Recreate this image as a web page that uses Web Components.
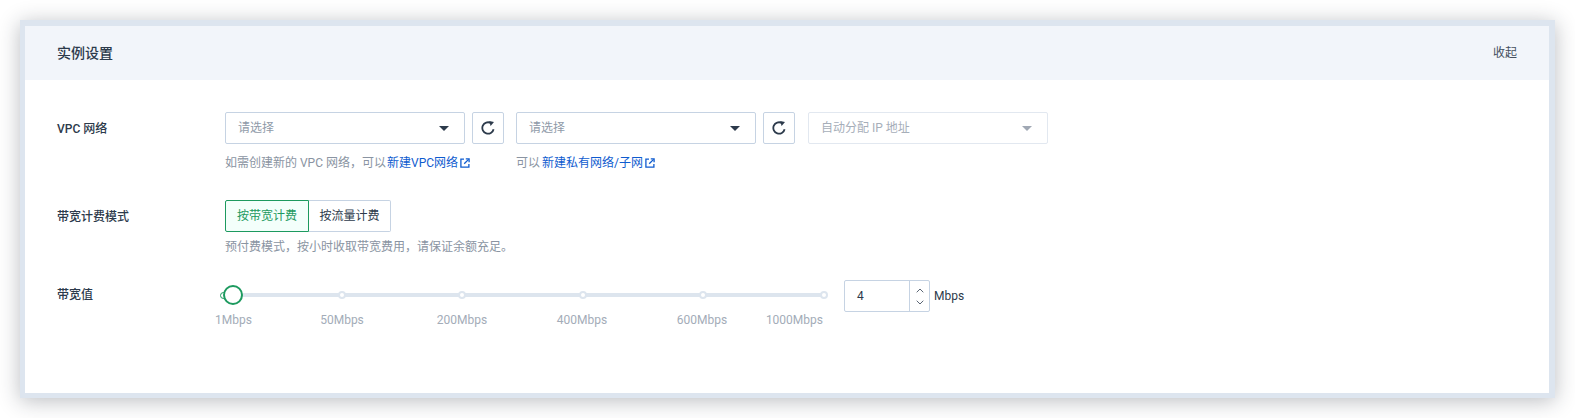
<!DOCTYPE html>
<html lang="zh">
<head>
<meta charset="utf-8">
<title>实例设置</title>
<style>
  html, body { margin: 0; background: #fff; }
  body {
    padding: 20px 20px 20px 20px;
    font: 12px/18px Roboto, "Noto Sans CJK SC", sans-serif;
    color: #2c3a4b;
  }
</style>
</head>
<body>
<inst-panel title-text="实例设置" action="收起">
  <form-row label="VPC 网络">
    <div style="display:flex;align-items:flex-start">
      <div>
        <div style="display:flex;gap:7px"><sel-box placeholder="请选择"></sel-box><refresh-btn></refresh-btn></div>
        <help-text style="margin-top:10px">如需创建新的 VPC 网络，可以<ext-link style="margin-left:1px">新建VPC网络</ext-link></help-text>
      </div>
      <div style="margin-left:12px">
        <div style="display:flex;gap:7px"><sel-box placeholder="请选择"></sel-box><refresh-btn></refresh-btn></div>
        <help-text style="margin-top:10px">可以<ext-link style="margin-left:2px">新建私有网络/子网</ext-link></help-text>
      </div>
      <sel-box placeholder="自动分配 IP 地址" disabled style="margin-left:13px"></sel-box>
    </div>
  </form-row>
  <form-row label="带宽计费模式" style="margin-top:28px">
    <seg-group><seg-item active>按带宽计费</seg-item><seg-item>按流量计费</seg-item></seg-group>
    <help-text style="margin-top:6px">预付费模式，按小时收取带宽费用，请保证余额充足。</help-text>
  </form-row>
  <form-row label="带宽值" style="margin-top:25px" label-offset="-2">
    <div style="display:flex;align-items:flex-start">
      <band-slider></band-slider>
      <num-input value="4" unit="Mbps"></num-input>
    </div>
  </form-row>
</inst-panel>

<script>
// 外层卡片：标题栏 + 内容区
class InstPanel extends HTMLElement {
  connectedCallback() {
    const root = this.shadowRoot || this.attachShadow({ mode: 'open' });
    root.innerHTML = `
      <style>
        :host {
          display: block;
          height: 367px;
          border: solid #dde5ef;
          border-width: 6px 6px 5px 5px;
          box-shadow: 0 3px 20px rgba(30, 35, 50, .3);
          background: #fff;
        }
        header {
          height: 54px;
          padding: 0 32px;
          display: flex;
          align-items: center;
          justify-content: space-between;
          background: #f2f5fa;
        }
        h2 { margin: 0; font-size: 14px; font-weight: 500; color: #2c3a4b; }
        a { font-size: 12px; color: #444f5e; }
        main { padding: 32px 32px 0; }
      </style>
      <header><h2>${this.getAttribute('title-text')}</h2><a>${this.getAttribute('action')}</a></header>
      <main><slot></slot></main>`;
  }
}

class FormRow extends HTMLElement {
  connectedCallback() {
    const root = this.shadowRoot || this.attachShadow({ mode: 'open' });
    const off = parseInt(this.getAttribute('label-offset')) || 1;
    root.innerHTML = `
      <style>
        :host { display: grid; grid-template-columns: 168px 1fr; }
        label { line-height: 32px; font-weight: 500; color: #2c3a4b; margin-top: ${off}px; }
      </style>
      <label>${this.getAttribute('label')}</label>
      <div><slot></slot></div>`;
  }
}

class SelBox extends HTMLElement {
  connectedCallback() {
    const root = this.shadowRoot || this.attachShadow({ mode: 'open' });
    root.innerHTML = `
      <style>
        :host {
          display: flex;
          box-sizing: border-box;
          width: 240px;
          height: 32px;
          padding: 0 15px 0 12px;
          align-items: center;
          justify-content: space-between;
          border: 1px solid #c6d3e3;
          border-radius: 2px;
          color: #8f9aa8;
          background: #fff;
        }
        :host([disabled]) { border-color: #e2e8f0; color: #a6aeb9; }
        i { width: 0; height: 0; border: 5px solid transparent; border-top: 5px solid #2c3a4b; border-bottom: 0; }
        :host([disabled]) i { border-top-color: #a0a8b4; }
      </style>
      <span>${this.getAttribute('placeholder')}</span><i></i>`;
  }
}

class RefreshBtn extends HTMLElement {
  connectedCallback() {
    const root = this.shadowRoot || this.attachShadow({ mode: 'open' });
    root.innerHTML = `
      <style>
        :host {
          display: flex;
          box-sizing: border-box;
          width: 32px;
          height: 32px;
          align-items: center;
          justify-content: center;
          border: 1px solid #c6d3e3;
          border-radius: 2px;
        }
      </style>
      <svg width="14" height="14" viewBox="0 0 14 14" fill="none">
        <path d="M12.6 8.2A5.7 5.7 0 1 1 9.8 2" stroke="#2c3a4b" stroke-width="1.8"/>
        <path d="M8.2 0 13 .9 9.6 5Z" fill="#2c3a4b"/>
      </svg>`;
  }
}

class HelpText extends HTMLElement {
  connectedCallback() {
    const root = this.shadowRoot || this.attachShadow({ mode: 'open' });
    root.innerHTML = `
      <style>:host { display: block; line-height: 18px; color: #8a94a2; white-space: nowrap; }</style>
      <slot></slot>`;
  }
}

class ExtLink extends HTMLElement {
  connectedCallback() {
    const root = this.shadowRoot || this.attachShadow({ mode: 'open' });
    root.innerHTML = `
      <style>
        :host { display: inline-flex; align-items: center; gap: 2px; color: #0f5ccf; }
        svg { display: block; }
      </style>
      <slot></slot>
      <svg width="10" height="10" viewBox="0 0 10 10" fill="none" stroke="#0f5ccf" stroke-width="1.3">
        <path d="M4 1.1H.9V9.1H8.9V6"/>
        <path d="M4.2 5.8 8.6 1.4"/>
        <path d="M5.8 .9H9.1V4.2"/>
      </svg>`;
  }
}

class SegGroup extends HTMLElement {
  connectedCallback() {
    const root = this.shadowRoot || this.attachShadow({ mode: 'open' });
    root.innerHTML = `<style>:host { display: flex; }</style><slot></slot>`;
  }
}

class SegItem extends HTMLElement {
  connectedCallback() {
    const root = this.shadowRoot || this.attachShadow({ mode: 'open' });
    root.innerHTML = `
      <style>
        :host {
          display: block;
          box-sizing: border-box;
          height: 32px;
          width: 82px;
          line-height: 30px;
          text-align: center;
          border: 1px solid #c6d3e3;
          border-left: 0;
          border-radius: 0 2px 2px 0;
          color: #2c3a4b;
        }
        :host([active]) {
          width: 84px;
          border: 1px solid #1d9a5f;
          border-radius: 2px 0 0 2px;
          background: #f3fffb;
          color: #1d9a5f;
        }
      </style>
      <slot></slot>`;
  }
}

class BandSlider extends HTMLElement {
  connectedCallback() {
    const root = this.shadowRoot || this.attachShadow({ mode: 'open' });
    const ticks = [120, 240, 361, 481];
    const labels = ['1Mbps', '50Mbps', '200Mbps', '400Mbps', '600Mbps', '1000Mbps'];
    root.innerHTML = `
      <style>
        :host { display: block; width: 622px; margin-left: -3px; }
        .rail { position: relative; height: 4px; margin: 12px 0 0; width: 604px; background: #dde5ee; border-radius: 2px; }
        .tick {
          position: absolute; top: -2px; width: 8px; height: 8px; margin-left: -4px;
          box-sizing: border-box; border-radius: 50%; background: #fff; border: 2px solid #dde5ee;
        }
        .start {
          position: absolute; top: -1.5px; left: -2px; width: 7px; height: 7px;
          box-sizing: border-box; border-radius: 50%; background: #fff; border: 1.5px solid #1d9a5f;
        }
        .handle {
          position: absolute; top: -8px; left: 1px; width: 20px; height: 20px;
          box-sizing: border-box; border-radius: 50%; background: #fff; border: 2px solid #1d9a5f;
        }
        .scale {
          display: grid;
          grid-template-columns: 67px 120px 120px 120px 120px 61px;
          margin: 15px 0 0 -7px;
          line-height: 16px;
          color: #a3acb8;
          white-space: nowrap;
        }
        .scale span { text-align: center; }
        .scale span:first-child { text-align: left; }
        .scale span:last-child { text-align: right; }
      </style>
      <div class="rail">
        <div class="start"></div>
        ${ticks.map(t => `<div class="tick" style="left:${t}px"></div>`).join('')}
        <div class="tick" style="left:602px"></div>
        <div class="handle"></div>
      </div>
      <div class="scale">${labels.map(l => `<span>${l}</span>`).join('')}</div>`;
  }
}

class NumInput extends HTMLElement {
  connectedCallback() {
    const root = this.shadowRoot || this.attachShadow({ mode: 'open' });
    root.innerHTML = `
      <style>
        :host { display: flex; align-items: center; margin-top: -1px; }
        .box {
          display: flex; box-sizing: border-box; width: 86px; height: 32px;
          border: 1px solid #c6d3e3; border-radius: 2px;
        }
        .val { flex: 1; padding-left: 12px; line-height: 30px; color: #2c3a4b; }
        .btns {
          width: 20px; border-left: 1px solid #c6d3e3;
          display: flex; flex-direction: column; align-items: center; justify-content: space-around;
          padding: 3px 0; box-sizing: border-box;
        }
        .unit { margin-left: 4px; color: #2c3a4b; }
        svg { display: block; }
      </style>
      <div class="box">
        <div class="val">${this.getAttribute('value')}</div>
        <div class="btns">
          <svg width="8" height="5" viewBox="0 0 8 5" fill="none" stroke="#5b6675"><path d="M.7 4.3 4 1 7.3 4.3"/></svg>
          <svg width="8" height="5" viewBox="0 0 8 5" fill="none" stroke="#5b6675"><path d="M.7.7 4 4 7.3.7"/></svg>
        </div>
      </div>
      <span class="unit">${this.getAttribute('unit')}</span>`;
  }
}

customElements.define('inst-panel', InstPanel);
customElements.define('form-row', FormRow);
customElements.define('sel-box', SelBox);
customElements.define('refresh-btn', RefreshBtn);
customElements.define('help-text', HelpText);
customElements.define('ext-link', ExtLink);
customElements.define('seg-group', SegGroup);
customElements.define('seg-item', SegItem);
customElements.define('band-slider', BandSlider);
customElements.define('num-input', NumInput);
</script>
</body>
</html>
